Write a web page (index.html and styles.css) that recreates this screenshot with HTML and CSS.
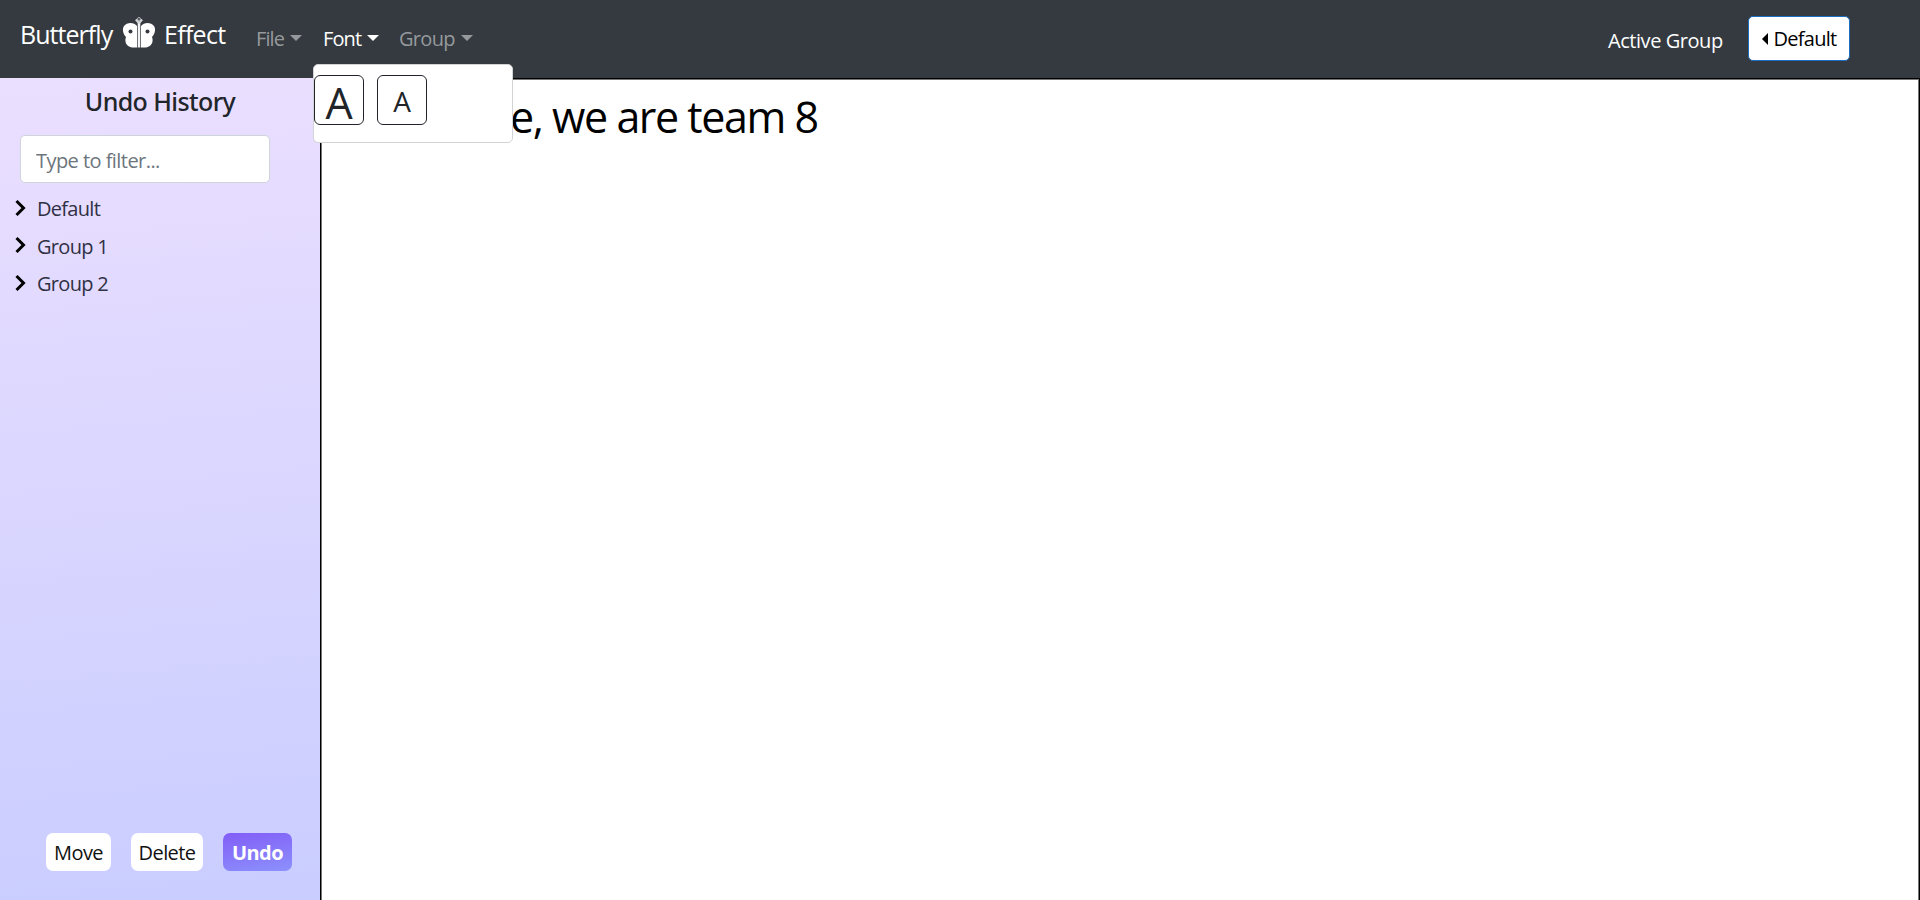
FILE: index.html
```
<!DOCTYPE html>
<html lang="en">
<head>
<meta charset="utf-8">
<title>Butterfly Effect</title>
<link rel="stylesheet" href="styles.css">
</head>
<body>
<nav class="navbar">
  <div class="brand">
    <span class="brand-first">Butterfly</span>
    <svg class="logo" width="34" height="32" viewBox="0 0 34 32">
      <path d="M15 9C12 5 5 5 2 9C0 12 1 17 4 20C2 25 5 30 10 30.500H15Z" fill="#fff"/>
      <path d="M19 9C22 5 29 5 32 9C34 12 33 17 30 20C32 25 29 30 24 30.500H19Z" fill="#fff"/>
      <path d="M15.700 5h2.600v25.500h-2.600z" fill="#f4f4f4"/>
      <path d="M17 6L13.800 2.500M17 6L20.200 2.500" stroke="#d5d7d9" stroke-width="2" fill="none"/>
      <circle cx="17" cy="2" r="1.500" stroke="#b5b8ba" stroke-width="1" fill="none"/>
      <circle cx="8.500" cy="14.500" r="2" fill="#343a40"/>
      <circle cx="25.500" cy="14.500" r="2" fill="#343a40"/>
    </svg>
    <span class="brand-last">Effect</span>
  </div>
  <div class="menu">
    <a class="menu-link file">File<i class="caret"></i></a>
    <div class="menu-item">
      <a class="menu-link font open">Font<i class="caret"></i></a>
      <div class="dropdown">
        <button class="size-btn large">A</button>
        <button class="size-btn small">A</button>
      </div>
    </div>
    <a class="menu-link group">Group<i class="caret"></i></a>
  </div>
  <div class="active-label">Active Group</div>
  <button class="active-btn"><i class="caret-left"></i><span>Default</span></button>
</nav>
<main class="workspace">
  <aside class="sidebar">
    <h1 class="title">Undo History</h1>
    <input class="filter" type="text" placeholder="Type to filter...">
    <ul class="groups">
      <li><svg class="chevron" width="12" height="18" viewBox="0 0 12 18"><path d="M1.500 2L8.500 9L1.500 16"/></svg><span>Default</span></li>
      <li><svg class="chevron" width="12" height="18" viewBox="0 0 12 18"><path d="M1.500 2L8.500 9L1.500 16"/></svg><span>Group 1</span></li>
      <li><svg class="chevron" width="12" height="18" viewBox="0 0 12 18"><path d="M1.500 2L8.500 9L1.500 16"/></svg><span>Group 2</span></li>
    </ul>
    <div class="actions">
      <button class="action move">Move</button>
      <button class="action delete">Delete</button>
      <button class="action undo">Undo</button>
    </div>
  </aside>
  <section class="editor"><p class="text">e, we are team 8</p></section>
</main>
</body>
</html>
```
FILE: styles.css
```
* { box-sizing: border-box; }
body {
  margin: 0;
  height: 900px;
  overflow: hidden;
  display: flex;
  flex-direction: column;
  font-family: "Open Sans", "Noto Sans", sans-serif;
  font-size: 20px;
  color: #212529;
}
button, input { font: inherit; margin: 0; padding: 0; }
.navbar {
  height: 78px;
  flex: none;
  display: flex;
  align-items: flex-start;
  background: #343a40;
  color: #fff;
  padding-left: 20px;
  white-space: nowrap;
}
.brand {
  display: flex;
  width: 235px;
  padding-top: 17px;
  font-size: 25px;
  line-height: 35px;
}
.brand-first { width: 102px; letter-spacing: -0.950px; }
.brand-last { margin-left: 8px; letter-spacing: -0.700px; }
.logo { flex: none; }
.menu { display: flex; padding-top: 24px; line-height: 30px; }
.menu-link {
  display: flex;
  align-items: center;
  color: #96999c;
}
.file { width: 68px; padding-left: 1px; letter-spacing: -0.900px; }
.font { letter-spacing: -0.900px; }
.group { letter-spacing: -0.700px; }
.menu-item { position: relative; width: 76px; }
.open { color: #fff; }
.caret {
  margin: -3px 0 0 6px;
  border: 6px solid transparent;
  border-top-color: currentColor;
  border-bottom: 0;
}
.dropdown {
  position: absolute;
  top: 40px;
  left: -10px;
  z-index: 2;
  width: 200px;
  height: 79px;
  display: flex;
  gap: 13px;
  padding-top: 10px;
  background: #fff;
  border: 1px solid #d3d4d5;
  border-radius: 5px;
}
.size-btn {
  width: 50px;
  height: 50px;
  background: #fff;
  border: 1px solid #212529;
  border-radius: 6px;
  color: #212529;
}
.large { font-size: 43px; line-height: 54px; }
.small { font-size: 28px; line-height: 50px; }
.active-label { margin: 26px 25px 0 auto; line-height: 30px; width: 115px; letter-spacing: -0.450px; }
.active-btn {
  width: 102px;
  height: 45px;
  margin: 16px 70px 0 0;
  display: flex;
  align-items: center;
  justify-content: center;
  gap: 6px;
  background: #fff;
  border: 1px solid #1b6ec2;
  border-radius: 5px;
  color: #000;
  letter-spacing: -0.750px;
}
.caret-left {
  border: 6px solid transparent;
  border-right-color: #000;
  border-left: 0;
}
.workspace { flex: 1; display: flex; }
.sidebar {
  width: 320px;
  flex: none;
  display: flex;
  flex-direction: column;
  background: linear-gradient(175deg, #ebdfff, #c9cdff);
}
.title {
  margin: 8px 0 19px;
  text-align: center;
  font-family: "Noto Sans", "Open Sans", sans-serif;
  font-size: 25px;
  line-height: 30px;
  font-weight: 500;
  letter-spacing: -0.600px;
}
.filter {
  width: 250px;
  height: 48px;
  margin-left: 20px;
  padding: 3px 15px 0;
  border: 1px solid #ced4da;
  border-radius: 5px;
  background: #fff;
  letter-spacing: -0.550px;
}
.filter::placeholder { color: #6c757d; opacity: 1; }
.groups { list-style: none; margin: 7px 0 0; padding: 0 0 0 15px; }
.groups li { display: flex; align-items: center; height: 37.500px; gap: 10px; color: #303044; letter-spacing: -0.700px; }
.chevron { fill: none; stroke: #000; stroke-width: 3; margin-top: -2px; }
.actions { display: flex; margin: auto 0 29px 46px; gap: 20px; }
.action {
  height: 38px;
  border: 0;
  border-radius: 7px;
  background: #fff;
  color: #111;
  padding-top: 1px;
  letter-spacing: -0.600px;
}
.move { width: 65px; }
.delete { width: 72px; }
.undo { width: 69px; background: linear-gradient(170deg, #825df7, #8c91fc); color: #fff; font-weight: 700; }
.editor {
  flex: 1;
  border: 1px solid #000;
  border-bottom: 0;
  box-shadow: inset 0 2px 0 -1px #767676, inset -1px 0 0 #767676, inset 1px 0 0 #767676, inset 0 1px 0 #767676;
  background: #fff;
}
.text { margin: 9px 0 0 189px; font-size: 43px; line-height: 58px; letter-spacing: -1.450px; color: #000; white-space: nowrap; }
```
